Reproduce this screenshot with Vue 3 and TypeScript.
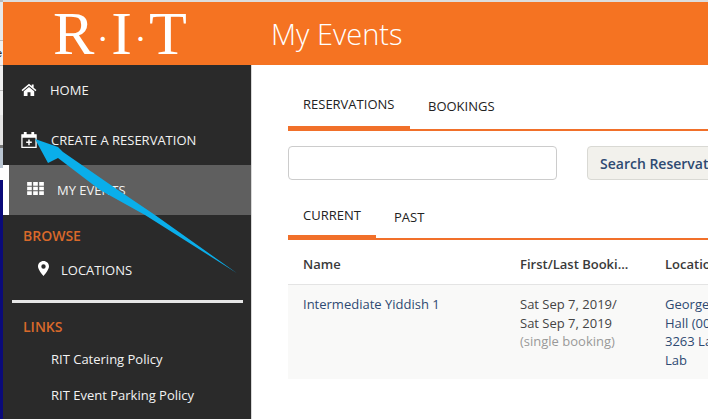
<script setup lang="ts">
const links: string[] = ['RIT Catering Policy', 'RIT Event Parking Policy']
</script>

<template>
  <div class="page">
    <div class="strip">
      <span class="strip-top"></span>
      <span class="strip-light"><i>e</i></span>
      <span class="strip-light"><i>r</i></span>
      <span class="strip-light"><i>r</i></span>
      <span class="strip-grey"></span>
      <span class="strip-blue"></span>
      <span class="strip-white"></span>
      <span class="strip-navy"></span>
    </div>
    <div class="shell">
      <header class="header">
        <div class="logo">R<span class="dot">·</span>I<span class="dot">·</span>T</div>
        <h1 class="title">My Events</h1>
      </header>
      <div class="body">
        <nav class="sidebar">
          <a class="nav">
            <svg class="ic home" width="16" height="13" viewBox="0 0 16 14"><path fill="#fff" d="M8 0.8 L11 3.3 V1.6 H13 V5 L16 7.6 L15 8.8 L8 3 L1 8.8 L0 7.6 Z M8 4.3 L13.600 9 V14 H9.600 V10 H6.400 V14 H2.400 V9 Z"/></svg>
            <span>HOME</span>
          </a>
          <a class="nav">
            <svg class="ic cal" width="16" height="18" viewBox="0 0 17 19"><path fill="none" stroke="#fff" stroke-width="1.4" d="M1 4H16V17.300H1Z"/><path fill="#fff" d="M1 4H16V7H1ZM3 1H6V5H3ZM11 1H14V5H11ZM7.700 9H9.300V11.200H11.500V12.800H9.300V15H7.700V12.800H5.500V11.200H7.700Z"/></svg>
            <span>CREATE A RESERVATION</span>
          </a>
          <a class="nav active">
            <svg class="ic grid-ic" width="17" height="13" viewBox="0 0 18 14"><path fill="#fff" d="M0 0H5V4H0ZM6.500 0H11.500V4H6.500ZM13 0H18V4H13ZM0 5H5V9H0ZM6.500 5H11.500V9H6.500ZM13 5H18V9H13ZM0 10H5V14H0ZM6.500 10H11.500V14H6.500ZM13 10H18V14H13Z"/></svg>
            <span>MY EVENTS</span>
          </a>
          <div class="sec browse">BROWSE</div>
          <a class="sub">
            <svg class="pin" width="11" height="15" viewBox="0 0 11 15"><path fill="#fff" fill-rule="evenodd" d="M5.500 0C8.500 0 11 2.400 11 5.400C11 8.200 7.500 12.500 5.500 15C3.500 12.500 0 8.200 0 5.400C0 2.400 2.500 0 5.500 0ZM5.500 3.300A2.200 2.200 0 1 0 5.500 7.700A2.200 2.200 0 1 0 5.500 3.300Z"/></svg>
            <span>LOCATIONS</span>
          </a>
          <div class="rule"></div>
          <div class="sec links">LINKS</div>
          <a v-for="l in links" :key="l" class="lnk">{{ l }}</a>
        </nav>
        <main class="main">
          <div class="tabs first">
            <a class="tab on">RESERVATIONS</a>
            <a class="tab">BOOKINGS</a>
          </div>
          <div class="search">
            <input class="input" type="text" />
            <button class="btn" type="button">Search Reservations</button>
          </div>
          <div class="tabs second">
            <a class="tab on">CURRENT</a>
            <a class="tab">PAST</a>
          </div>
          <div class="grid head">
            <div>Name</div>
            <div>First/Last Booki...</div>
            <div>Location</div>
          </div>
          <div class="grid row">
            <div class="link">Intermediate Yiddish 1</div>
            <div>Sat Sep 7, 2019/<br />Sat Sep 7, 2019<br /><span class="muted">(single booking)</span></div>
            <div class="link">George Eastman<br />Hall (001)<br />3263 Language<br />Lab</div>
          </div>
        </main>
      </div>
    </div>
    <svg class="arrow" width="708" height="419" viewBox="0 0 708 419">
      <path fill="#0aaeea" d="M35 139 L58 147 L63 152 L118 190 L155 215 L236.700 273 L145 215 L100 190 L58 158 L48 163 Z"/>
    </svg>
  </div>
</template>

<style>
html, body { margin: 0; background: #fff; }
</style>

<style scoped>
.page {
  position: relative;
  display: flex;
  width: 708px;
  height: 419px;
  overflow: hidden;
  font-family: "Open Sans", sans-serif;
  color: #333;
}
.strip {
  width: 3px;
  flex: none;
  display: flex;
  flex-direction: column;
  overflow: hidden;
  background: #ececec;
}
.strip span { display: block; flex: none; }
.strip-top { height: 40px; background: #e8e8e8; border-top: 2px solid #bbb; box-sizing: border-box; }
.strip-light { height: 25px; line-height: 20px; overflow: hidden; background: #efefef; border-top: 1px solid #bbb; box-sizing: border-box; }
.strip-light i { font: normal 11px "Liberation Sans", sans-serif; color: #111; margin-left: -4px; }
.strip-grey { height: 33px; background: #e4e4e4; border-bottom: 3px solid #777; box-sizing: border-box; }
.strip-blue { height: 20px; background: #b9c5d2; }
.strip-white { height: 12px; background: #fff; }
.strip-navy { flex: 1 !important; background: #0a0a7a; }
.shell { flex: 1; display: flex; flex-direction: column; min-width: 0; }
.header {
  height: 65px;
  box-sizing: border-box;
  border-top: 2px solid #ddd;
  flex: none;
  display: flex;
  align-items: center;
  background: #f57322;
  color: #fff;
}
.logo {
  width: 268px;
  flex: none;
  box-sizing: border-box;
  padding-left: 50px;
  font: 62px/63px "Liberation Serif", serif;
  white-space: nowrap;
}
.dot {
  display: inline-block;
  width: 17px;
  text-align: center;
  font-size: 36px;
  line-height: 0;
  vertical-align: 3px;
}
.title { margin: 0; font-size: 29px; font-weight: 300; }
.body { flex: 1; display: flex; min-height: 0; }
.sidebar {
  width: 248px;
  flex: none;
  background: #2a2a2a;
  color: #f2f2f2;
  font-size: 13px;
  border-right: 1px solid #d8d8d8;
  box-sizing: content-box;
}
.nav {
  height: 50px;
  display: flex;
  align-items: center;
  padding-left: 18px;
}
.nav .ic { flex: none; margin-right: 13px; }
.nav .home { margin-top: -2px; margin-right: 13px; }
.nav .cal { margin-top: -1px; margin-right: 14px; }
.nav .grid-ic { margin-top: -3px; }
.active {
  background: #5f5f5f;
  border-left: 6px solid #fff;
  padding-left: 18px;
}
.sec {
  margin: 0 0 0 20px;
  font-size: 14px;
  font-weight: 600;
  line-height: 19px;
  color: #d9692a;
}
.browse { margin-top: 11px; }
.links { margin-top: 14px; }
.sub {
  display: flex;
  align-items: center;
  height: 30px;
  margin-top: 10px;
  padding-left: 35px;
}
.pin { margin: -3px 12px 0 0; }
.rule { height: 3px; margin: 15px 8px 0 9px; background: #e6e6e6; }
.lnk {
  display: flex;
  align-items: center;
  height: 36px;
  padding-left: 48px;
  position: relative;
  top: 5px;
}
.main { flex: 1; min-width: 0; padding-left: 36px; overflow: hidden; }
.tabs {
  display: flex;
  height: 66px;
  box-sizing: border-box;
  align-items: flex-end;
  border-bottom: 2px solid #f1702a;
  font-size: 13px;
  color: #222;
}
.first { margin-bottom: 15px; }
.second { height: 60px; }
.tab { line-height: 17px; white-space: nowrap; }
.tab.on {
  padding-left: 15px;
  padding-right: 15px;
  border-bottom: 5px solid #f1702a;
  margin-bottom: -2px;
}
.first .tab.on { width: 92px; padding-bottom: 13px; }
.first .tab + .tab { padding: 0 15px 14px 18px; }
.second .tab.on { width: 58px; padding-bottom: 11px; }
.second .tab + .tab { padding: 0 15px 12px 18px; }
.search { display: flex; align-items: stretch; height: 34px; gap: 30px; }
.input {
  width: 269px;
  flex: none;
  box-sizing: border-box;
  border: 1px solid #ccc;
  border-radius: 4px;
  background: #fff;
  padding: 0;
}
.btn {
  flex: none;
  padding: 0 12px;
  border: 1px solid #d9d9d4;
  border-radius: 4px;
  background: #f2f1ec;
  color: #2e4a72;
  font: 600 14px "Open Sans", sans-serif;
  white-space: nowrap;
}
.grid {
  display: grid;
  grid-template-columns: 217px 145px 200px;
  width: 420px;
  font-size: 13px;
  line-height: 18.700px;
}
.grid > div { padding-left: 15px; white-space: nowrap; }
.head {
  height: 45px;
  box-sizing: border-box;
  padding-top: 4px;
  align-items: center;
  font-weight: 600;
  color: #3a3a3a;
  border-bottom: 1px solid #e4e4e4;
}
.row { height: 94px; padding-top: 10px; box-sizing: border-box; background: #f9f9f8; color: #444; }
.link { color: #2e4a72; }
.muted { color: #999; }
.arrow { position: absolute; inset: 0; pointer-events: none; }
</style>
